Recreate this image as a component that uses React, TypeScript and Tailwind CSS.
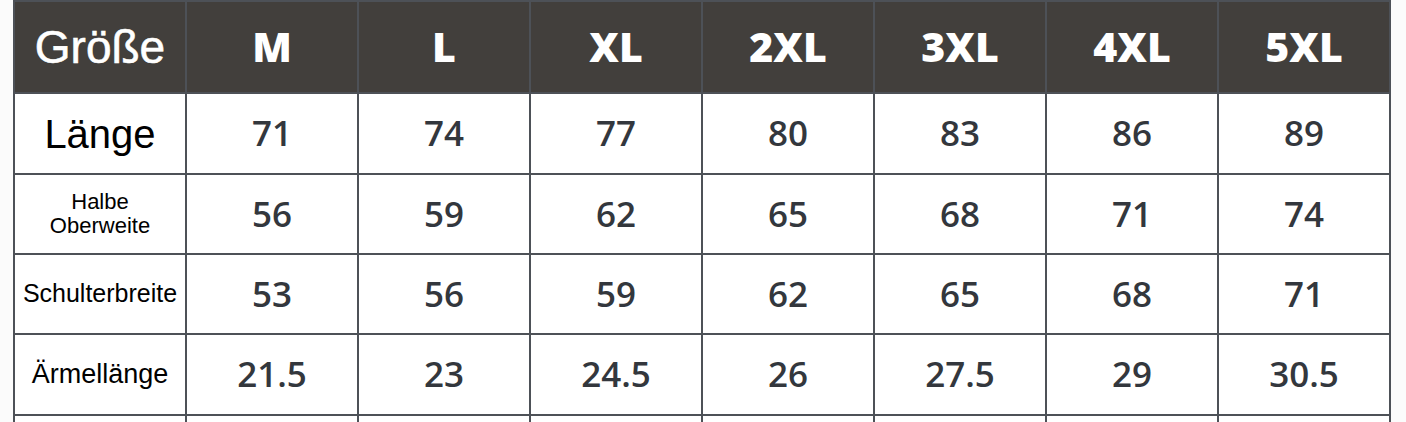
import React from "react";

const sizes = ["M", "L", "XL", "2XL", "3XL", "4XL", "5XL"];
const rows: { label: React.ReactNode; labelCls: string; h: string; values: string[] }[] = [
  { label: "Länge", labelCls: "text-[40px]", h: "h-[79px]", values: ["71", "74", "77", "80", "83", "86", "89"] },
  {
    label: (
      <>
        Halbe
        <br />
        Oberweite
      </>
    ),
    labelCls: "text-[22px] leading-[24px]",
    h: "h-[78px]",
    values: ["56", "59", "62", "65", "68", "71", "74"],
  },
  { label: "Schulterbreite", labelCls: "text-[25px]", h: "h-[78px]", values: ["53", "56", "59", "62", "65", "68", "71"] },
  { label: "Ärmellänge", labelCls: "text-[27px]", h: "h-[79px]", values: ["21.5", "23", "24.5", "26", "27.5", "29", "30.5"] },
  { label: "", labelCls: "text-[24px]", h: "h-[79px]", values: ["", "", "", "", "", "", ""] },
];

export default function App() {
  return (
    <div className="w-[1406px] h-[422px] overflow-hidden bg-[#fbfbfb] pl-[13px]">
      <div className="w-[1378px] bg-[#4d5157] p-[2px] grid grid-cols-8 gap-[2px]">
        <div className="h-[90px] bg-[#423f3c] flex items-center justify-center text-white text-[46px] [-webkit-text-stroke:0.6px_white] font-['Liberation_Sans',Arial,sans-serif]">
          Größe
        </div>
        {sizes.map((s) => (
          <div
            key={s}
            className="h-[90px] bg-[#423f3c] flex items-center justify-center text-white text-[41px] font-extrabold font-['Open_Sans',sans-serif]"
          >
            {s}
          </div>
        ))}
        {rows.map((r, i) => (
          <React.Fragment key={i}>
            <div
              className={`${r.h} bg-white flex items-center justify-center text-center text-black font-['Liberation_Sans',Arial,sans-serif] ${r.labelCls}`}
            >
              <span>{r.label}</span>
            </div>
            {r.values.map((v, j) => (
              <div
                key={j}
                className={`${r.h} bg-white flex items-center justify-center text-[#33373d] text-[35px] font-semibold font-['Open_Sans',sans-serif]`}
              >
                {v}
              </div>
            ))}
          </React.Fragment>
        ))}
      </div>
    </div>
  );
}
